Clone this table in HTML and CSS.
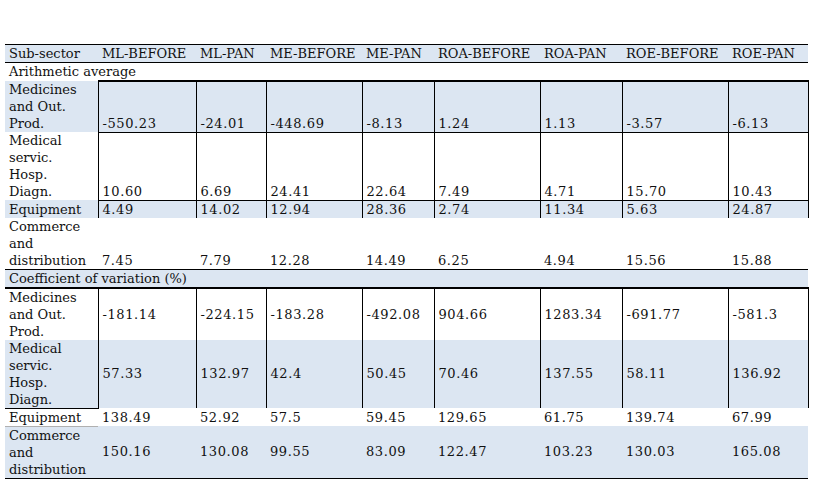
FILE: index.html
```html
<!DOCTYPE html>
<html>
<head>
<meta charset="utf-8">
<title>Sub-sector indicators</title>
<link rel="stylesheet" href="styles.css">
</head>
<body>
<table class="stats">
  <colgroup>
    <col class="c0"><col class="c1"><col class="c2"><col class="c3"><col class="c4">
    <col class="c5"><col class="c6"><col class="c7"><col class="c8">
  </colgroup>
  <thead>
    <tr class="head">
      <th>Sub-sector</th><th>ML-BEFORE</th><th>ML-PAN</th><th>ME-BEFORE</th><th>ME-PAN</th>
      <th>ROA-BEFORE</th><th>ROA-PAN</th><th>ROE-BEFORE</th><th>ROE-PAN</th>
    </tr>
  </thead>
  <tbody>
    <tr class="group"><td colspan="9">Arithmetic average</td></tr>
    <tr class="blue boxed first bottom">
      <th>Medicines and Out. Prod.</th>
      <td>-550.23</td><td>-24.01</td><td>-448.69</td><td>-8.13</td><td>1.24</td><td>1.13</td><td>-3.57</td><td>-6.13</td>
    </tr>
    <tr class="boxed bottom">
      <th>Medical servic. Hosp. Diagn.</th>
      <td>10.60</td><td>6.69</td><td>24.41</td><td>22.64</td><td>7.49</td><td>4.71</td><td>15.70</td><td>10.43</td>
    </tr>
    <tr class="blue boxed">
      <th>Equipment</th>
      <td>4.49</td><td>14.02</td><td>12.94</td><td>28.36</td><td>2.74</td><td>11.34</td><td>5.63</td><td>24.87</td>
    </tr>
    <tr class="plain bottom closed">
      <th>Commerce and distribution</th>
      <td>7.45</td><td>7.79</td><td>12.28</td><td>14.49</td><td>6.25</td><td>4.94</td><td>15.56</td><td>15.88</td>
    </tr>
    <tr class="group blue thick"><td colspan="9">Coefficient of variation (%)</td></tr>
    <tr class="boxed middle">
      <th>Medicines and Out. Prod.</th>
      <td>-181.14</td><td>-224.15</td><td>-183.28</td><td>-492.08</td><td>904.66</td><td>1283.34</td><td>-691.77</td><td>-581.3</td>
    </tr>
    <tr class="blue boxed middle open">
      <th>Medical servic. Hosp. Diagn.</th>
      <td>57.33</td><td>132.97</td><td>42.4</td><td>50.45</td><td>70.46</td><td>137.55</td><td>58.11</td><td>136.92</td>
    </tr>
    <tr class="plain grey">
      <th>Equipment</th>
      <td>138.49</td><td>52.92</td><td>57.5</td><td>59.45</td><td>129.65</td><td>61.75</td><td>139.74</td><td>67.99</td>
    </tr>
    <tr class="blue plain middle closed">
      <th>Commerce and distribution</th>
      <td>150.16</td><td>130.08</td><td>99.55</td><td>83.09</td><td>122.47</td><td>103.23</td><td>130.03</td><td>165.08</td>
    </tr>
  </tbody>
</table>
</body>
</html>
```

FILE: styles.css
```css
body { margin: 44px 0 0 5px; background: white; color: #111; font: 13px/17px "DejaVu Serif", "Liberation Serif", serif; }
table.stats { table-layout: fixed; width: 803px; border-collapse: collapse; }
col.c0 { width: 93px; }
col.c1 { width: 98px; }
col.c2 { width: 70px; }
col.c3 { width: 96px; }
col.c4 { width: 72px; }
col.c5 { width: 106px; }
col.c6 { width: 82px; }
col.c7 { width: 106px; }
col.c8 { width: 80px; }
th,
td { padding: 0 4px; font-weight: normal; text-align: left; vertical-align: bottom; white-space: normal; }
tbody td { letter-spacing: 0.6px; }
tr.head th { padding: 0 4px; background: #dce6f2; border-top: 1px solid black; border-bottom: 1px solid black; white-space: nowrap; }
tr.group td { padding: 0 4px; letter-spacing: 0; }
tr.blue th,
tr.blue td { background: #dce6f2; }
tr.boxed td { border-left: 1px solid black; border-right: 1px solid black; }
tr.first td { border-top: 2px solid black; }
tr.bottom td { border-bottom: 1px solid black; }
tr.middle td { vertical-align: middle; }
tr.closed th,
tr.closed td { border-bottom: 1px solid black; }
tr.thick td { border-bottom: 2px solid black; }
tr.middle th { vertical-align: top; }
tr.open th { border-bottom: 1px solid black; }
tr.grey th { border-bottom: 1px solid #b0b0b0; }
```
